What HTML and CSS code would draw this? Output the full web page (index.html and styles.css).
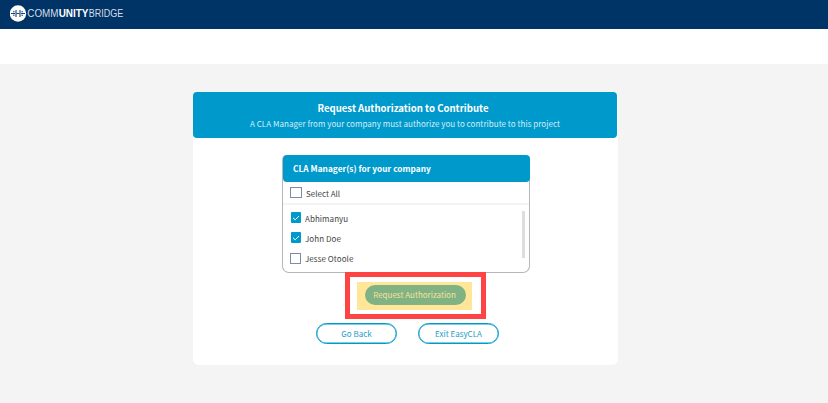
FILE: index.html
```html
<!DOCTYPE html>
<html lang="en">
<head>
<meta charset="utf-8">
<title>Request Authorization to Contribute</title>
<link rel="stylesheet" href="styles.css">
</head>
<body>
<header class="topbar">
  <svg class="logo" width="120" height="20" viewBox="0 0 120 20">
    <circle cx="8" cy="9.5" r="8.2" fill="#fff"/>
    <path d="M1 9.5H5M6.5 9.5H9.5M11 9.5H15M3 7.8H4.6M11.4 7.8H13M3 11.2H4.6M11.4 11.2H13" fill="none" stroke="#003366" stroke-width=".9"/>
    <path d="M6 6V13M10 6V13" fill="none" stroke="#003366" stroke-width="1"/>
    <text class="wordmark" x="17.3" y="13.2" textLength="31.2" lengthAdjust="spacingAndGlyphs">COMM</text>
    <text class="wordmark strong" x="48.7" y="13.2" textLength="29.8" lengthAdjust="spacingAndGlyphs">UNITY</text>
    <text class="wordmark" x="78.8" y="13.2" textLength="34.5" lengthAdjust="spacingAndGlyphs">BRIDGE</text>
  </svg>
</header>
<div class="subbar"></div>
<main class="card">
  <div class="card-head">
    <h1>Request Authorization to Contribute</h1>
    <p>A CLA Manager from your company must authorize you to contribute to this project</p>
  </div>
  <section class="managers">
    <h2>CLA Manager(s) for your company</h2>
    <label class="row all"><span class="box"></span><span>Select All</span></label>
    <div class="list">
      <div class="names">
        <label class="row"><span class="box on"><svg width="10" height="11" viewBox="0 0 10 11"><path d="M2 5.8L4.2 7.8L8 4"/></svg></span><span>Abhimanyu</span></label>
        <label class="row"><span class="box on"><svg width="10" height="11" viewBox="0 0 10 11"><path d="M2 5.8L4.2 7.8L8 4"/></svg></span><span>John Doe</span></label>
        <label class="row"><span class="box"></span><span>Jesse Otoole</span></label>
      </div>
      <div class="scroll"></div>
    </div>
  </section>
  <div class="callout"><div class="highlight"><button class="request"><span>Request Authorization</span></button></div></div>
  <div class="actions">
    <button class="outline"><span>Go Back</span></button>
    <button class="outline"><span>Exit EasyCLA</span></button>
  </div>
</main>
</body>
</html>
```
FILE: styles.css
```css
* { box-sizing: border-box; margin: 0; padding: 0; }
body {
  height: 403px;
  overflow: hidden;
  background: #f4f4f4;
  font-family: "Noto Sans CJK SC", "Noto Sans", sans-serif;
  font-size: 8px;
  color: #444;
}
.topbar { height: 29px; background: #003366; padding: 4px 0 0 10px; }
.logo { display: block; }
.wordmark { font-family: "Liberation Sans", sans-serif; font-size: 10px; fill: #d5dfe9; }
.strong { font-weight: 700; fill: #fff; }
.subbar { height: 35px; background: #fff; }
.card {
  width: 425px;
  height: 273px;
  margin: 28px 0 0 193px;
  background: #fff;
  border-radius: 6px;
  display: flex;
  flex-direction: column;
}
.card-head {
  width: 424px;
  height: 46px;
  padding-top: 9px;
  padding-right: 4px;
  background: #0099cc;
  border-radius: 4px;
  color: #fff;
  text-align: center;
}
h1 { font-size: 9.6px; line-height: 15px; font-weight: 700; }
.card-head p { line-height: 16px; color: #d4eef7; margin-left: 4px; letter-spacing: .035px; }
.managers {
  width: 248px;
  height: 118px;
  margin: 17px 0 0 89px;
  border: 1px solid #b4b6ba;
  border-top: 0;
  border-radius: 5px 5px 7px 7px;
}
h2 {
  height: 27px;
  margin-right: -1px;
  padding-left: 10px;
  background: #0099cc;
  border-radius: 4px;
  color: #fff;
  font-size: 8.3px;
  line-height: 26px;
  letter-spacing: .03px;
}
.row { display: flex; height: 20px; padding-left: 7px; line-height: 14px; }
.row > span:last-child { margin-left: 4px; }
.all { height: 23px; padding-top: 5px; border-bottom: 2px solid #f4f4f4; }
.box { width: 11px; height: 11px; border: 1px solid #7f8ba6; flex: none; }
.all .box { width: 12px; }
.box.on { width: 10px; margin-left: 1px; border: 0; border-radius: 1px; background: #0099cc; }
.box svg { display: block; }
.box path { fill: none; stroke: #fff; stroke-width: 1; }
.list { display: flex; justify-content: space-between; padding: 6px 4px 0 0; }
.names { padding-top: 1px; }
.names .row:last-child .box { margin-top: 1px; }
.names .row > span:last-child { letter-spacing: .06px; }
.scroll { width: 3px; height: 47px; background: #dedede; }
.callout {
  width: 141px;
  height: 47px;
  margin: -1px 0 0 152px;
  padding: 5px 9px 4px 7px;
  border: 5px solid #ff4444;
  background: #fff;
  position: relative;
}
.highlight { height: 28px; width: 115px; padding: 3px 6px 5px 8px; background: #ffe699; }
button { display: flex; align-items: center; justify-content: center; font: inherit; border: 0; }
.request { width: 101px; height: 20px; padding: 0 2px 2px 0; border-radius: 10px; background: #80b283; color: #f5e29c; }
.actions { display: flex; gap: 21px; margin: 4px 0 0 123px; }
.outline { width: 81px; height: 21px; border: 1px solid #0099cc; box-shadow: inset 0 0 0 .4px #0099cc; border-radius: 11px; background: #fff; color: #1a9ec8; }
```
